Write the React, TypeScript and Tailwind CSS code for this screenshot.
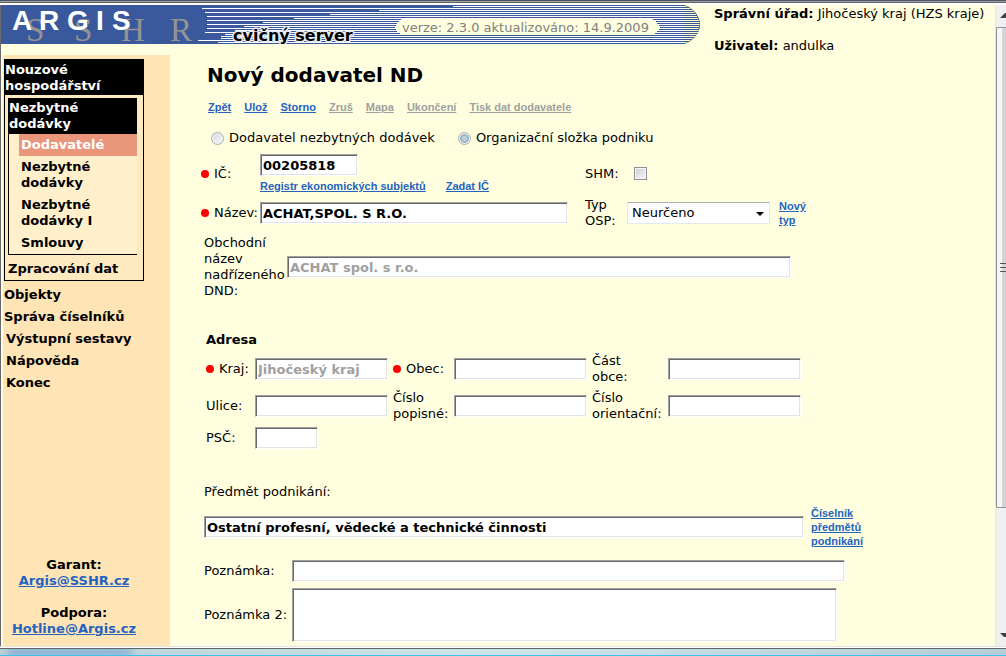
import type { ReactNode } from "react";

const sunken =
  "border border-t-[#a0a0a0] border-l-[#a0a0a0] border-b-white border-r-white bg-white shadow-[inset_1px_1px_0_#696969,inset_-1px_-1px_0_#e3e3e3] outline-none";
const fieldBase = `${sunken} block h-[22px] px-0.5 font-bold disabled:text-[#a0a0a0]`;
const smallLink =
  "font-['Liberation_Sans',sans-serif] text-[11px] leading-[14px] font-bold text-[#2563c0] underline";

const white: [number, number][] = [
  [1, 452], [3, 201], [5, 378], [7, 204], [9, 329], [11, 206], [13, 293], [15, 206], [17, 262], [19, 206],
  [21, 243], [23, 206], [25, 234], [27, 204], [29, 224], [31, 220], [33, 220], [35, 197], [37, 217],
];
const pill: [number, number, number][] = [
  [14, 400, 652], [16, 398, 655], [18, 396, 656], [20, 395, 658], [22, 394, 659], [24, 395, 658], [26, 396, 656], [28, 399, 654],
];

function Banner() {
  return (
    <svg width="699" height="39" viewBox="0 0 699 39" className="block shrink-0" role="img" aria-label="ARGIS SSHR">
      <defs>
        <clipPath id="cap">
          <path d="M0 0H683C692 3 699 11 699 19.5S692 36 683 39H0Z" />
        </clipPath>
      </defs>
      <g clipPath="url(#cap)" shapeRendering="crispEdges">
        <rect width="699" height="39" fill="#39599c" />
        {white.map(([y, x]) => (
          <rect key={y} x={x} y={y} width={682 - x} height="1" fill="#fff" />
        ))}
        {white.map(([y]) => (
          <rect key={y} x="682" y={y} width="17" height="1" fill="#ffffd0" />
        ))}
      </g>
      <g fill="none" stroke="#55550a" strokeWidth="1">
        <path d="M683 .5C692 3 698.500 11 698.500 19.500S692 36 683 38.500" strokeDasharray="1 1.500" />
      </g>
      <g shapeRendering="crispEdges" fill="#ffffe0">
        {pill.map(([y, a, b]) => (
          <rect key={y} x={a} y={y} width={b - a} height="2" />
        ))}
      </g>
      <g fill="#949494" fontFamily="'Liberation Serif', serif" fontSize="33">
        <text x="25" y="36">S</text>
        <text x="73" y="36">S</text>
        <text x="120" y="36">H</text>
        <text x="169" y="36">R</text>
      </g>
      <g fill="#fff" fontFamily="'Liberation Sans', sans-serif" fontWeight="700" fontSize="28">
        <text x="11" y="25">A</text>
        <text x="38" y="25">R</text>
        <text x="66" y="25">G</text>
        <text x="95" y="25">I</text>
        <text x="111" y="25">S</text>
      </g>
      <text
        x="232" y="36" fontFamily="'DejaVu Sans', sans-serif" fontWeight="700" fontSize="16"
        fill="#000" stroke="#e8ecf4" strokeWidth="3" strokeLinejoin="round" paintOrder="stroke"
      >
        cvičný server
      </text>
      <text x="401" y="27" fontFamily="'DejaVu Sans', sans-serif" fontSize="13" fill="#808080">
        verze: 2.3.0 aktualizováno: 14.9.2009
      </text>
    </svg>
  );
}

function NavItem({ children, className = "" }: { children: ReactNode; className?: string }) {
  return (
    <a href="#" className={`block py-[3px] ${className}`}>
      {children}
    </a>
  );
}

function Sidebar() {
  return (
    <aside className="ml-0.5 flex w-[167px] shrink-0 flex-col justify-between bg-[#ffe4b5] pt-1 pb-[9px] pl-px font-bold">
      <nav className="w-[140px]">
        <div className="mb-[3px] border border-black bg-[#ffeac0]">
          <a href="#" className="block bg-black pt-0.5 pb-px text-white">Nouzové hospodářství</a>
          <div className="mt-[3px] mr-1.5 ml-[3px] border-b border-l border-black bg-[#ffefca]">
            <a href="#" className="block bg-black py-0.5 text-white">Nezbytné dodávky</a>
            <div className="ml-2.5">
              <NavItem className="bg-[#e9967a] pl-0.5 text-white">Dodavatelé</NavItem>
              <NavItem className="pl-0.5">Nezbytné dodávky</NavItem>
              <NavItem className="pl-0.5">Nezbytné dodávky I</NavItem>
              <NavItem className="pl-0.5">Smlouvy</NavItem>
            </div>
          </div>
          <NavItem className="mt-[3px] pl-[3px]">Zpracování dat</NavItem>
        </div>
        <NavItem>Objekty</NavItem>
        <NavItem>Správa číselníků</NavItem>
        <NavItem className="pl-0.5">Výstupní sestavy</NavItem>
        <NavItem className="pl-0.5">Nápověda</NavItem>
        <NavItem className="pl-0.5">Konec</NavItem>
      </nav>
      <div className="w-[140px] text-center">
        <p>Garant:</p>
        <a href="mailto:Argis@SSHR.cz" className="text-[#2563c0] underline">Argis@SSHR.cz</a>
        <p className="mt-4">Podpora:</p>
        <a href="mailto:Hotline@Argis.cz" className="text-[#2563c0] underline">Hotline@Argis.cz</a>
      </div>
    </aside>
  );
}

function Required({ htmlFor, children }: { htmlFor: string; children: ReactNode }) {
  return (
    <label htmlFor={htmlFor} className="flex items-center gap-[5px] whitespace-nowrap">
      <span className="size-2 rounded-full bg-[#f00]" />
      {children}
    </label>
  );
}

const radio =
  "size-[13px] appearance-none rounded-full border border-[#a9adb0] shadow-[inset_0_0_0_1px_#f4f4f4]";

function SupplierForm() {
  const actions: [string, boolean][] = [
    ["Zpět", true], ["Ulož", true], ["Storno", true], ["Zruš", false], ["Mapa", false], ["Ukončení", false], ["Tisk dat dodavatele", false],
  ];
  return (
    <main className="min-w-0 flex-1 pt-2 pb-1 pl-[31px]">
      <h1 className="ml-1.5 text-[20px] leading-6 font-bold">Nový dodavatel ND</h1>
      <div className="mt-[13px] ml-[7px] flex gap-[13px]">
        {actions.map(([text, on]) => (
          <a key={text} href="#" className={`${smallLink} ${on ? "" : "text-[#a0a0a0]!"}`}>{text}</a>
        ))}
      </div>

      <form onSubmit={(e) => e.preventDefault()}>
        <div className="mt-4 ml-2.5 flex gap-[23px]">
          <label className="flex items-center gap-[5px]">
            <input type="radio" name="kind" className={`${radio} bg-linear-to-br from-[#d6d6d6] to-[#fafafa]`} />
            Dodavatel nezbytných dodávek
          </label>
          <label className="flex items-center gap-[5px]">
            <input
              type="radio" name="kind" defaultChecked
              className={`${radio} bg-[radial-gradient(circle,#b9d3e2_0_2px,#8ea3b3_4px,#f0f0f0_5px)]`}
            />
            Organizační složka podniku
          </label>
        </div>

        <div className="mt-2 grid grid-cols-[59px_325px_42px_152px_1fr] items-center gap-y-1">
          <Required htmlFor="ic">IČ:</Required>
          <div>
            <input id="ic" defaultValue="00205818" className={`${fieldBase} w-[98px]`} />
            <div className="mt-[3px] flex gap-5">
              <a href="#" className={smallLink}>Registr ekonomických subjektů</a>
              <a href="#" className={smallLink}>Zadat IČ</a>
            </div>
          </div>
          <label htmlFor="shm">SHM:</label>
          <input
            id="shm" type="checkbox"
            className="ml-[7px] size-[13px] appearance-none border border-[#8e8f8f] bg-linear-to-br from-[#cbcfd5] to-[#f6f6f6] shadow-[inset_0_0_0_1px_#f4f4f4]"
          />
          <span />

          <Required htmlFor="nazev">Název:</Required>
          <input id="nazev" defaultValue="ACHAT,SPOL. S R.O." className={`${fieldBase} w-[308px]`} />
          <label htmlFor="typ">Typ OSP:</label>
          <div className="relative w-[143px]">
            <select
              id="typ"
              className="block h-[22px] w-full appearance-none rounded-[1px] border border-[#e3e9ef] border-t-[#abadb3] bg-white pl-1 outline-none"
            >
              <option>Neurčeno</option>
            </select>
            <svg className="pointer-events-none absolute top-[10px] right-[6px]" width="8" height="4" viewBox="0 0 8 4">
              <path d="M0 0H8L4 4Z" fill="#000" />
            </svg>
          </div>
          <a href="#" className={`${smallLink} w-8`}>Nový typ</a>
        </div>

        <div className="mt-1.5 ml-[3px] grid grid-cols-[83px_504px] items-center">
          <label htmlFor="dnd">Obchodní název nadřízeného DND:</label>
          <input id="dnd" disabled defaultValue="ACHAT spol. s r.o." className={`${fieldBase} w-full`} />
        </div>

        <h2 className="mt-[33px] ml-[5px] font-bold">Adresa</h2>
        <div className="mt-[5px] ml-[5px] grid grid-cols-[49px_138px_61px_138px_76px_133px] items-center gap-y-[5px]">
          <Required htmlFor="kraj">Kraj:</Required>
          <input id="kraj" disabled defaultValue="Jihočeský kraj" className={`${fieldBase} w-[133px]`} />
          <Required htmlFor="obec">Obec:</Required>
          <input id="obec" className={`${fieldBase} w-[133px]`} />
          <label htmlFor="cast">Část<br />obce:</label>
          <input id="cast" className={`${fieldBase} w-[133px]`} />
          <label htmlFor="ulice">Ulice:</label>
          <input id="ulice" className={`${fieldBase} w-[133px]`} />
          <label htmlFor="cp">Číslo popisné:</label>
          <input id="cp" className={`${fieldBase} w-[133px]`} />
          <label htmlFor="co">Číslo orientační:</label>
          <input id="co" className={`${fieldBase} w-[133px]`} />
          <label htmlFor="psc">PSČ:</label>
          <input id="psc" className={`${fieldBase} w-[63px]`} />
        </div>

        <div className="mt-[35px] ml-[3px]">
          <label htmlFor="predmet" className="block">Předmět podnikání:</label>
          <div className="mt-1.5 flex items-center gap-[7px]">
            <input
              id="predmet" defaultValue="Ostatní profesní, vědecké a technické činnosti"
              className={`${fieldBase} w-[600px]`}
            />
            <a href="#" className={`${smallLink} w-14`}>Číselník předmětů podnikání</a>
          </div>
          <div className="mt-3 grid grid-cols-[88px_553px] items-center gap-y-1.5">
            <label htmlFor="pozn">Poznámka:</label>
            <input id="pozn" className={`${fieldBase} w-full`} />
            <label htmlFor="pozn2" className="whitespace-nowrap">Poznámka 2:</label>
            <textarea id="pozn2" className={`${sunken} block h-[54px] w-[545px] resize-none px-0.5`} />
          </div>
        </div>
      </form>
    </main>
  );
}

function ScrollBar() {
  return (
    <div className="flex w-[11px] shrink-0 flex-col overflow-hidden border-l border-[#e6e6ea] bg-[#f0f0f0]" aria-hidden="true">
      <svg width="10" height="22" viewBox="0 0 10 22" className="shrink-0">
        <path d="M4 13L9 8H10V13Z" fill="#404040" />
      </svg>
      <div className="flex h-3/4 flex-col items-end justify-center rounded-l-xs border border-r-0 border-[#8e8f9a] bg-linear-to-r from-[#f6f6f6] from-50% to-[#d4d4d8] to-60%">
        <svg width="6" height="11" viewBox="0 0 6 11" shapeRendering="crispEdges">
          <path d="M0 1H6M0 5H6M0 9H6" stroke="#555" strokeWidth="1" transform="translate(0 .5)" />
        </svg>
      </div>
      <div className="flex-1" />
      <svg width="10" height="18" viewBox="0 0 10 18" className="shrink-0">
        <path d="M4 5H10V9H8Z" fill="#404040" />
      </svg>
    </div>
  );
}

export default function App() {
  return (
    <div className="flex min-h-screen flex-col bg-[#ffffe0] font-['DejaVu_Sans','Liberation_Sans',sans-serif] text-[13px] leading-4 text-black">
      <div className="h-[5px] shrink-0 border-t border-[#485667] bg-white">
        <div className="h-0.5 border-b border-[#626262] bg-[#a0a0a0]" />
      </div>
      <div className="flex flex-1 border-l border-[#696969]">
        <div className="flex min-w-0 flex-1 flex-col">
          <header className="flex h-[50px] items-start gap-3.5">
            <Banner />
            <div className="pt-px whitespace-nowrap">
              <p><b>Správní úřad:</b> Jihočeský kraj (HZS kraje)</p>
              <p className="mt-4"><b>Uživatel:</b> andulka</p>
            </div>
          </header>
          <div className="flex flex-1">
            <Sidebar />
            <SupplierForm />
          </div>
        </div>
        <ScrollBar />
      </div>
      <div className="h-2.5 shrink-0 border-t border-[#e3e3e3] bg-white pt-px">
        <div className="h-2 overflow-hidden border-t border-b border-t-[#606468] border-b-[#3cc4ea] bg-linear-to-r from-[#b9d0d6] via-[#cde4e8] to-[#b4cfd8]">
          <div className="ml-2 h-full w-[124px] bg-[#6f9fd0] blur-xs" />
        </div>
      </div>
    </div>
  );
}
